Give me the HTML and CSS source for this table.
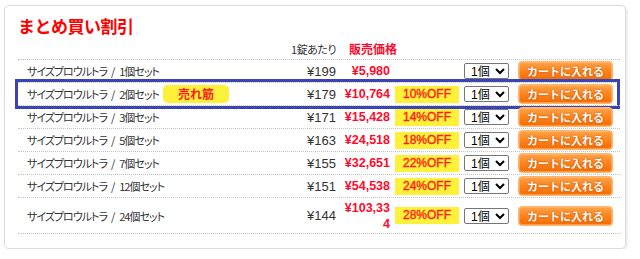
FILE: index.html
```html
<!DOCTYPE html>
<html lang="ja">
<head>
<meta charset="utf-8">
<title>まとめ買い割引</title>
<link rel="stylesheet" href="styles.css">
</head>
<body>
<div class="card">
  <h2 class="title">まとめ買い割引</h2>
  <div class="head">
    <div class="c-name"></div>
    <div class="c-unit">1錠あたり</div>
    <div class="c-price h-price">販売価格</div>
  </div>
  <div class="row">
    <div class="c-name">サイズプロウルトラ<span class="sl">/</span>1個セット</div>
    <div class="c-unit">¥199</div>
    <div class="c-price">¥5,980</div>
    <div class="c-off"></div>
    <div class="c-sel"><select class="qty"><option>1個</option></select></div>
    <div class="c-btn"><button class="cart">カートに入れる</button></div>
  </div>
  <div class="row hl">
    <div class="c-name">サイズプロウルトラ<span class="sl">/</span>2個セット<span class="best">売れ筋</span></div>
    <div class="c-unit">¥179</div>
    <div class="c-price">¥10,764</div>
    <div class="c-off"><span class="off">10%OFF</span></div>
    <div class="c-sel"><select class="qty"><option>1個</option></select></div>
    <div class="c-btn"><button class="cart">カートに入れる</button></div>
    <div class="frame"></div>
  </div>
  <div class="row">
    <div class="c-name">サイズプロウルトラ<span class="sl">/</span>3個セット</div>
    <div class="c-unit">¥171</div>
    <div class="c-price">¥15,428</div>
    <div class="c-off"><span class="off">14%OFF</span></div>
    <div class="c-sel"><select class="qty"><option>1個</option></select></div>
    <div class="c-btn"><button class="cart">カートに入れる</button></div>
  </div>
  <div class="row">
    <div class="c-name">サイズプロウルトラ<span class="sl">/</span>5個セット</div>
    <div class="c-unit">¥163</div>
    <div class="c-price">¥24,518</div>
    <div class="c-off"><span class="off">18%OFF</span></div>
    <div class="c-sel"><select class="qty"><option>1個</option></select></div>
    <div class="c-btn"><button class="cart">カートに入れる</button></div>
  </div>
  <div class="row">
    <div class="c-name">サイズプロウルトラ<span class="sl">/</span>7個セット</div>
    <div class="c-unit">¥155</div>
    <div class="c-price">¥32,651</div>
    <div class="c-off"><span class="off">22%OFF</span></div>
    <div class="c-sel"><select class="qty"><option>1個</option></select></div>
    <div class="c-btn"><button class="cart">カートに入れる</button></div>
  </div>
  <div class="row">
    <div class="c-name">サイズプロウルトラ<span class="sl">/</span>12個セット</div>
    <div class="c-unit">¥151</div>
    <div class="c-price">¥54,538</div>
    <div class="c-off"><span class="off">24%OFF</span></div>
    <div class="c-sel"><select class="qty"><option>1個</option></select></div>
    <div class="c-btn"><button class="cart">カートに入れる</button></div>
  </div>
  <div class="row last">
    <div class="c-name">サイズプロウルトラ<span class="sl">/</span>24個セット</div>
    <div class="c-unit">¥144</div>
    <div class="c-price">¥103,334</div>
    <div class="c-off"><span class="off">28%OFF</span></div>
    <div class="c-sel"><select class="qty"><option>1個</option></select></div>
    <div class="c-btn"><button class="cart">カートに入れる</button></div>
  </div>
</div>
</body>
</html>
```
FILE: styles.css
```css
* { box-sizing: border-box; }
html, body { background: #fff; }
body {
  margin: 0;
  padding: 5px 14px 0 4px;
  font-family: "Liberation Sans", "Noto Sans CJK JP", sans-serif;
  font-size: 12px;
  color: #333;
}
.card {
  position: relative;
  width: 622px;
  height: 244px;
  border: 1px solid #dcdcdc;
  border-radius: 5px;
  box-shadow: 1px 1px 3px rgba(0,0,0,0.12);
  padding: 8px 5px 0 13px;
}
.title {
  margin: 0;
  font-family: "Noto Sans CJK JP", sans-serif;
  font-size: 17px;
  line-height: 24px;
  font-weight: bold;
  color: #ff0000;
  letter-spacing: -0.5px;
}
.head, .row {
  display: grid;
  grid-template-columns: 1fr 48px 52px 69px 50px 104px;
  padding-right: 7px;
  align-items: center;
}
.head {
  height: 21px;
}
.row {
  position: relative;
  height: 23px;
  border-top: 1px dotted #c4c4c4;
}
.row.last {
  height: 37px;
  border-bottom: 1px dotted #c4c4c4;
}
.c-name {
  padding-left: 9px;
  font-family: "Noto Sans CJK JP", sans-serif;
  font-feature-settings: "palt";
  font-size: 11px;
  letter-spacing: -1px;
  color: #333;
  display: flex;
  align-items: center;
  white-space: nowrap;
}
.sl {
  margin: 0 4px;
  letter-spacing: 0;
}
.c-unit {
  text-align: right;
  font-size: 13px;
  color: #333;
  padding-right: 2px;
}
.head .c-unit {
  font-family: "Noto Sans CJK JP", sans-serif;
  font-feature-settings: "palt";
  font-size: 11px;
  letter-spacing: -0.5px;
}
.c-price {
  text-align: right;
  font-size: 12.5px;
  font-weight: bold;
  color: #ff0a2d;
  line-height: 16px;
  word-break: break-all;
  padding-left: 4px;
}
.h-price {
  text-align: left;
  padding-left: 11px;
  font-family: "Noto Sans CJK JP", sans-serif;
  font-size: 12px;
  white-space: nowrap;
}
.c-off { padding-left: 5px; }
.off {
  display: block;
  height: 17px;
  line-height: 17px;
  background: #fff03a;
  color: #ff1a1a;
  font-size: 12px;
  text-align: center;
  -webkit-text-stroke: 0.35px #ff1a1a;
}
.best {
  display: inline-block;
  margin-left: 4px;
  letter-spacing: 0;
  width: 66px;
  height: 18px;
  line-height: 18px;
  border-radius: 5px;
  background: #fff03a;
  color: #ff1a1a;
  font-weight: bold;
  font-size: 12px;
  text-align: center;
}
.c-sel { padding-left: 5px; }
.qty {
  display: block;
  width: 45px;
  height: 16px;
  padding: 0 0 0 2px;
  font-family: "Liberation Sans", "Noto Sans CJK JP", sans-serif;
  font-size: 12px;
  color: #000;
  border: 1px solid #767676;
  border-radius: 2px;
  background: #fff;
}
.c-btn { padding-left: 9px; }
.cart {
  display: block;
  width: 95px;
  height: 20px;
  padding: 0;
  border: 1px solid #ffb36c;
  border-radius: 4px;
  background: linear-gradient(#ffa54b 0%, #fb8722 45%, #f36c00 100%);
  box-shadow: inset 0 0 0 1px rgba(255,200,140,0.5);
  color: #fff;
  font-family: "Noto Sans CJK JP", sans-serif;
  font-weight: bold;
  font-size: 11px;
  line-height: 18px;
  text-shadow: 0 0 2px #b84a00;
}
.frame {
  position: absolute;
  left: -3px;
  right: 0;
  top: -4px;
  bottom: -4px;
  border: 3px solid #3a44b8;
  pointer-events: none;
}
```
